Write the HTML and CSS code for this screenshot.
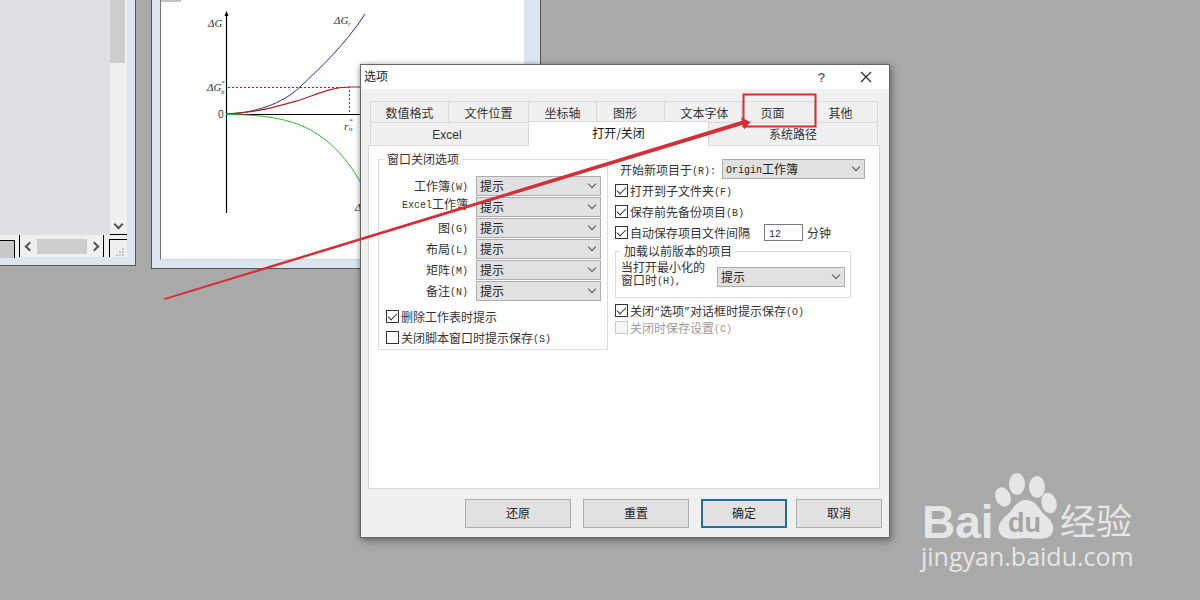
FILE: index.html
```html
<!DOCTYPE html>
<html lang="zh-CN">
<head>
    <meta charset="UTF-8">
    <title>选项</title>
    <link rel="stylesheet" href="styles.css">
</head>
<body>
<div class="desktop">

    <!-- 左边的工作表窗口 -->
    <div class="win win-left">
        <div class="win-body">
            <div class="sheet-row">
                <div class="sheet"></div>
                <div class="vscroll">
                    <div class="vthumb"></div>
                    <div class="arrow-down"></div>
                </div>
            </div>
            <div class="hbar">
                <div class="sheet-tab"></div>
                <div class="hscroll">
                    <span class="arrow-left"></span>
                    <div class="hthumb"></div>
                    <span class="arrow-right"></span>
                </div>
                <div class="sizer">
                    <svg width="17" height="18" viewBox="0 0 17 18">
                        <path class="grip" d="M12 8h2v2h-2zM9 11h2v2H9zM12 11h2v2h-2zM6 14h2v2H6zM9 14h2v2H9zM12 14h2v2h-2z"/>
                    </svg>
                </div>
            </div>
        </div>
    </div>

    <!-- 图窗口 -->
    <div class="win win-graph">
        <div class="graph-page">
            <svg class="chart" width="362" height="258" viewBox="161 0 362 258">
                <rect x="161" y="0" width="20" height="2" fill="#c4c4c4"/>
                <path d="M226.5 14V213" stroke="#000" stroke-width="1.2" fill="none"/>
                <path d="M226.5 11l-2 5h4z" fill="#000"/>
                <path d="M226 114.5H362" stroke="#000" stroke-width="1" fill="none"/>
                <path d="M228 87.5H349.500V114" stroke="#d01010" stroke-width="1" stroke-dasharray="2 2" fill="none"/>
                <path d="M226 114C255 113 282 104 300 87C320 68 345 45 365 14" stroke="#2a2a90" stroke-width="1" fill="none"/>
                <path d="M226 114C255 113 275 107 300 100C320 93 332 87 349 87H362" stroke="#a5262a" stroke-width="1.2" fill="none"/>
                <path d="M226 114.5C255 114.5 280 117 300 125C325 135 345 155 361 183" stroke="#2dbb2d" stroke-width="1" fill="none"/>
                <text class="ch" x="208" y="27">ΔG</text>
                <text class="ch" x="334" y="24">ΔG</text>
                <text class="ch-sub" x="348" y="26">r</text>
                <text class="ch" x="207" y="91">ΔG</text>
                <text class="ch-sub" x="221" y="85">*</text>
                <text class="ch-sub" x="221" y="94">h</text>
                <text class="ch-up" x="218" y="118">0</text>
                <text class="ch" x="344" y="130">r</text>
                <text class="ch-sub" x="349" y="123">*</text>
                <text class="ch-sub" x="349" y="131">n</text>
                <text class="ch" x="355" y="211">Δ</text>
            </svg>
        </div>
    </div>

    <!-- 选项对话框 -->
    <div class="dialog">
        <div class="titlebar">
            <span class="title-text">选项</span>
            <span class="title-help">?</span>
            <svg class="title-close" width="12" height="12" viewBox="0 0 12 12">
                <path d="M1 1L11 11M11 1L1 11" stroke="#222" stroke-width="1.1" fill="none"/>
            </svg>
        </div>

        <div class="tabs">
            <div class="tab-row tab-row-1">
                <div class="tab">数值格式</div>
                <div class="tab">文件位置</div>
                <div class="tab">坐标轴</div>
                <div class="tab tab-shift">图形</div>
                <div class="tab tab-nudge">文本字体</div>
                <div class="tab tab-shift">页面</div>
                <div class="tab tab-shift">其他</div>
            </div>
            <div class="tab-row tab-row-2">
                <div class="tab tab-excel">Excel</div>
                <div class="tab tab-active">打开/关闭</div>
                <div class="tab">系统路径</div>
            </div>
        </div>

        <div class="panel">
            <fieldset class="group group-close">
                <legend>窗口关闭选项</legend>
                <div class="field-grid">
                    <label>工作簿<span class="lat">(W)</span></label>
                    <div class="select">提示</div>
                    <label class="label-up"><span class="lat">Excel</span>工作簿</label>
                    <div class="select">提示</div>
                    <label>图<span class="lat">(G)</span></label>
                    <div class="select">提示</div>
                    <label>布局<span class="lat">(L)</span></label>
                    <div class="select">提示</div>
                    <label>矩阵<span class="lat">(M)</span></label>
                    <div class="select">提示</div>
                    <label>备注<span class="lat">(N)</span></label>
                    <div class="select">提示</div>
                </div>
                <div class="check-line check-a"><span class="check on"></span><span>删除工作表时提示</span></div>
                <div class="check-line check-b"><span class="check"></span><span>关闭脚本窗口时提示保存<span class="lat">(S)</span></span></div>
            </fieldset>

            <div class="right-col">
                <div class="start-row">
                    <span class="start-label">开始新项目于<span class="lat">(R):</span></span>
                    <div class="select select-start"><span class="lat">Origin</span>工作簿</div>
                </div>
                <div class="check-line"><span class="check on"></span><span>打开到子文件夹<span class="lat">(F)</span></span></div>
                <div class="check-line"><span class="check on"></span><span>保存前先备份项目<span class="lat">(B)</span></span></div>
                <div class="check-line">
                    <span class="check on"></span>
                    <span>自动保存项目文件间隔</span>
                    <span class="num-input"><span class="lat">12</span></span>
                    <span class="unit">分钟</span>
                </div>
                <fieldset class="group group-old">
                    <legend>加载以前版本的项目</legend>
                    <div class="old-row">
                        <div class="old-label">当打开最小化的<br>窗口时<span class="lat">(H),</span></div>
                        <div class="select select-old">提示</div>
                    </div>
                </fieldset>
                <div class="check-line check-prompt"><span class="check on"></span><span>关闭<span class="lat">“</span>选项<span class="lat">”</span>对话框时提示保存<span class="lat">(O)</span></span></div>
                <div class="check-line check-off"><span class="check off"></span><span>关闭时保存设置<span class="lat">(C)</span></span></div>
            </div>
        </div>

        <div class="footer">
            <button class="btn btn-wide btn-first">还原</button>
            <button class="btn btn-wide">重置</button>
            <button class="btn btn-default">确定</button>
            <button class="btn btn-last">取消</button>
        </div>
    </div>

    <!-- 红色标注和水印 -->
    <svg class="overlay" width="1200" height="600" viewBox="0 0 1200 600">
        <rect class="mark-box" x="743.5" y="94.5" width="72" height="32"/>
        <path class="mark" d="M164 298.200L742 120.800L741 117.500L750.500 122L744 129.500L743 124.800L164.500 300Z"/>
        <g class="wm">
            <ellipse cx="1017" cy="484" rx="8" ry="11"/>
            <ellipse cx="1037" cy="487" rx="8" ry="11"/>
            <ellipse cx="1003" cy="497" rx="7.500" ry="10" transform="rotate(-25 1003 497)"/>
            <ellipse cx="1049" cy="503" rx="7.500" ry="10.500" transform="rotate(-15 1049 503)"/>
            <path d="M1026 500C1036 500 1039 510 1046 516C1054 522 1055 530 1051 535C1046 541 1034 538 1026 538C1018 538 1006 541 1001 535C996 529 999 522 1006 516C1013 510 1016 500 1026 500Z"/>
            <text class="wm-bai" x="922" y="538">Bai</text>
            <text class="wm-cn" x="1060" y="535">经验</text>
            <text class="wm-url" x="921" y="566">jingyan.baidu.com</text>
        </g>
        <text class="wm-du" x="1008" y="532">du</text>
    </svg>
</div>
</body>
</html>
```

FILE: styles.css
```css
html, body {
    margin: 0;
    height: 100%;
}

body {
    overflow: hidden;
    font-family: "Noto Sans CJK SC", "Liberation Sans", sans-serif;
    font-size: 12px;
    color: #222;
}

.desktop {
    position: relative;
    width: 1200px;
    height: 600px;
    overflow: hidden;
    background-color: #a9a9a9;
}

.lat {
    font-family: "Liberation Mono", monospace;
    font-size: 10px;
    line-height: 1;
    vertical-align: 1px;
}

/* 窗口 */
.win {
    position: absolute;
    box-sizing: border-box;
    border: 1px solid #555;
    background-color: #dce6f1;
}

.win-left {
    left: -10px;
    top: -10px;
    width: 146px;
    height: 276px;
    padding: 0 8px 8px 0;
}

.win-body {
    display: flex;
    flex-direction: column;
    height: 100%;
}

.sheet-row {
    display: flex;
    flex: 1;
}

.sheet {
    flex: 1;
    background-color: #e0e0e4;
}

.vscroll {
    display: flex;
    flex-direction: column;
    justify-content: space-between;
    box-sizing: border-box;
    width: 17px;
    padding-bottom: 6px;
    background-color: #f0f0f0;
    border-bottom: 1px solid #000;
}

.vthumb {
    width: 15px;
    height: 72px;
    background-color: #cdcdcd;
}

.arrow-down,
.arrow-left,
.arrow-right {
    width: 5px;
    height: 5px;
    border-right: 2px solid #555;
    border-bottom: 2px solid #555;
}

.arrow-down {
    align-self: center;
    transform: rotate(45deg);
}

.arrow-left {
    transform: rotate(135deg);
}

.arrow-right {
    transform: rotate(-45deg);
}

.hbar {
    display: flex;
    height: 22px;
    background-color: #f0f0f0;
}

.sheet-tab {
    box-sizing: border-box;
    width: 24px;
    height: 18px;
    margin-top: 5px;
    background-color: #c8c8c8;
    border-top: 1px solid #000;
    border-right: 1px solid #000;
}

.hscroll {
    display: flex;
    flex: 1;
    align-items: center;
    justify-content: space-between;
    box-sizing: border-box;
    margin-left: 4px;
    padding: 0 5px 0 6px;
    border-left: 1px solid #000;
    border-right: 1px solid #000;
}

.hthumb {
    width: 50px;
    height: 15px;
    background-color: #cdcdcd;
}

.sizer {
    box-sizing: border-box;
    width: 18px;
    margin-left: 5px;
    margin-top: 4px;
    border-top: 1px solid #000;
    border-left: 1px solid #000;
}

.grip {
    fill: #c4c4c4;
}

.win-graph {
    left: 151px;
    top: -10px;
    width: 390px;
    height: 279px;
    padding: 9px 16px 9px 8px;
}

.graph-page {
    height: 100%;
    background-color: #fff;
    border-left: 1px solid #777;
    border-bottom: 1px solid #ccd3db;
}

.chart {
    display: block;
}

.ch,
.ch-sub,
.ch-up {
    font-family: "Liberation Serif", serif;
    fill: #333;
}

.ch {
    font-size: 11px;
    font-style: italic;
}

.ch-sub {
    font-size: 7px;
    font-style: italic;
}

.ch-up {
    font-size: 10px;
    font-family: "Liberation Sans", sans-serif;
}

/* 对话框 */
.dialog {
    position: absolute;
    left: 360px;
    top: 64px;
    display: flex;
    flex-direction: column;
    box-sizing: border-box;
    width: 530px;
    height: 474px;
    background-color: #f0f0f0;
    border: 1px solid #666;
    box-shadow: 2px 3px 8px rgba(0, 0, 0, 0.35), -1px 0 4px rgba(0, 0, 0, 0.2);
}

.titlebar {
    display: flex;
    align-items: center;
    height: 24px;
    padding: 0 17px 0 3px;
    background-color: #fff;
}

.title-text {
    flex: 1;
    margin-top: -2px;
    line-height: 22px;
}

.title-help {
    margin-right: 35px;
    font-family: "Liberation Sans", sans-serif;
    font-size: 13px;
    color: #333;
}

.tabs {
    margin: 12px 0 0 9px;
}

.tab-row {
    display: grid;
    width: 508px;
}

.tab-row-1 {
    grid-template-columns: 79px 80px 68px 68px 77px 73px 63px;
    height: 21px;
}

.tab-row-2 {
    grid-template-columns: 159px 180px 169px;
    height: 23px;
}

.tab {
    box-sizing: border-box;
    background-color: #f0f0f0;
    border: 1px solid #d9d9d9;
    border-left-width: 0;
    border-bottom-width: 0;
    text-align: center;
    line-height: 21px;
    color: #333;
}

.tab:first-child {
    border-left-width: 1px;
}

.tab-shift {
    padding-right: 11px;
}

.tab-nudge {
    padding-left: 3px;
}

.tab-excel {
    padding: 2px 5px 0 0;
    font-family: "Liberation Sans", sans-serif;
}

.tab-active {
    position: relative;
    z-index: 1;
    height: 25px;
    margin-top: -1px;
    background-color: #fff;
    border-bottom-width: 0;
    color: #111;
}

.panel {
    display: flex;
    align-items: flex-start;
    gap: 7px;
    box-sizing: border-box;
    width: 512px;
    height: 344px;
    margin-left: 7px;
    padding: 5px 0 0 9px;
    background-color: #fff;
    border: 1px solid #d9d9d9;
}

.group {
    margin: 0;
    padding: 0;
    box-sizing: border-box;
    min-width: 0;
    border: 1px solid #dcdcdc;
}

.group legend {
    padding: 0 3px;
    margin-left: 5px;
    line-height: 16px;
    color: #333;
}

.group-close {
    width: 230px;
    height: 199px;
    padding-top: 2px;
}

.field-grid {
    display: grid;
    grid-template-columns: 89px 125px;
    grid-auto-rows: 20px;
    row-gap: 1px;
    column-gap: 8px;
    align-items: center;
    margin-top: 7px;
}

.field-grid label {
    text-align: right;
    line-height: 18px;
    color: #333;
}

.field-grid .label-up {
    margin-top: -6px;
}

.select {
    position: relative;
    box-sizing: border-box;
    height: 20px;
    padding-left: 3px;
    background-color: #e1e1e1;
    border: 1px solid #adadad;
    line-height: 18px;
    color: #222;
}

.select::after {
    content: "";
    position: absolute;
    right: 5px;
    top: 4px;
    width: 5px;
    height: 5px;
    border-right: 1px solid #555;
    border-bottom: 1px solid #555;
    transform: rotate(45deg);
}

.check-line {
    display: flex;
    align-items: center;
    height: 17px;
    white-space: nowrap;
    color: #333;
}

.check {
    position: relative;
    box-sizing: border-box;
    flex: none;
    width: 13px;
    height: 13px;
    margin-right: 2px;
    background-color: #fff;
    border: 1px solid #333;
}

.check.on::after {
    content: "";
    position: absolute;
    left: 3px;
    top: 0;
    width: 4px;
    height: 8px;
    border-right: 1px solid #333;
    border-bottom: 1px solid #333;
    transform: rotate(45deg);
}

.check.off {
    border-color: #ccc;
    background-color: #f6f6f6;
}

.check-a {
    margin: 7px 0 0 7px;
}

.check-b {
    margin: 4px 0 0 7px;
}

.right-col {
    display: flex;
    flex-direction: column;
    width: 250px;
}

.start-row {
    display: flex;
    align-items: center;
    height: 20px;
    margin: 8px 0 3px;
}

.start-label {
    width: 107px;
    padding-left: 5px;
    box-sizing: border-box;
    color: #333;
}

.select-start {
    width: 143px;
}

.right-col .check-line {
    margin-bottom: 4px;
}

.right-col .check-prompt {
    margin-top: 4px;
    margin-bottom: 0;
}

.right-col .check-off {
    margin-bottom: 0;
    color: #9a9a9a;
}

.num-input {
    box-sizing: border-box;
    width: 39px;
    height: 17px;
    margin-left: 14px;
    padding-left: 4px;
    background-color: #fff;
    border: 1px solid #7a7a7a;
    line-height: 15px;
}

.unit {
    margin-left: 4px;
}

.group-old {
    width: 236px;
    height: 55px;
    margin-top: -2px;
}

.old-row {
    display: flex;
    align-items: flex-start;
    padding: 1px 5px 0;
}

.old-label {
    width: 96px;
    line-height: 13px;
    color: #333;
}

.select-old {
    width: 128px;
    margin-top: 7px;
}

.footer {
    display: flex;
    padding: 10px 0 0 104px;
}

.btn {
    box-sizing: border-box;
    width: 86px;
    height: 29px;
    padding: 0 0 3px;
    background-color: #e1e1e1;
    border: 1px solid #adadad;
    font-family: inherit;
    font-size: 12px;
    color: #222;
}

.btn-wide {
    width: 106px;
    margin-right: 12px;
}

.btn-default {
    margin-right: 9px;
    border: 2px solid #1f6f9f;
}

/* 标注和水印 */
.overlay {
    position: absolute;
    left: 0;
    top: 0;
    z-index: 2;
}

.mark {
    fill: #d32f38;
}

.mark-box {
    fill: none;
    stroke: #d32f38;
    stroke-width: 2;
}

.wm {
    fill: #e6e6e6;
}

.wm-bai {
    font-family: "Liberation Sans", sans-serif;
    font-size: 46px;
    font-weight: bold;
}

.wm-cn {
    font-family: "Noto Sans CJK SC", sans-serif;
    font-size: 36px;
}

.wm-url {
    font-family: "Open Sans", sans-serif;
    font-size: 25px;
}

.wm-du {
    font-family: "Liberation Sans", sans-serif;
    font-size: 27px;
    font-weight: bold;
    fill: #a4a4a4;
}
```
